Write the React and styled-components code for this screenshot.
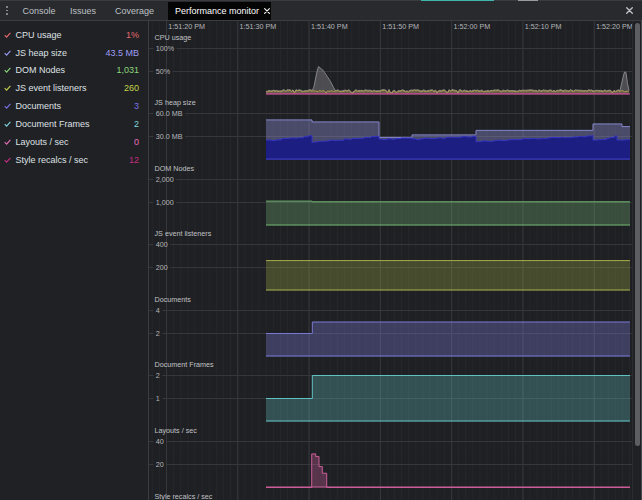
import React from 'react';
import styled, { createGlobalStyle } from 'styled-components';

const GlobalStyle = createGlobalStyle`
  html, body {
    margin: 0;
    padding: 0;
    background: #202124;
  }
  body {
    width: 642px;
    height: 500px;
    overflow: hidden;
    font-family: "Liberation Sans", Arial, sans-serif;
  }
`;

// plot geometry (px, inside each chart svg)
const PLOT_W = 483;
const PLOT_H = 54.6;
const TOP = 5.5;
const RANGE = 46;
const ZERO = TOP + RANGE;
const DATA_START = 117;
const DATA_END = 481;

const yOf = (v, max) => TOP + (1 - v / max) * RANGE;

// deterministic noise so every render looks the same
let seed = 11;
const rand = () => {
  seed = (seed * 16807) % 2147483647;
  return (seed - 1) / 2147483646;
};

const stepPaths = (steps, max, end = DATA_END) => {
  const pts = [];
  steps.forEach(([x, v], i) => {
    if (i > 0) pts.push([x, yOf(steps[i - 1][1], max)]);
    pts.push([x, yOf(v, max)]);
  });
  pts.push([end, yOf(steps[steps.length - 1][1], max)]);
  const line = pts.map(([x, y]) => `${x.toFixed(1)} ${y.toFixed(2)}`).join(' L ');
  return {
    line: `M ${line}`,
    area: `M ${steps[0][0]} ${ZERO} L ${line} L ${end} ${ZERO} Z`,
  };
};

const linePaths = (pts, max) => {
  const line = pts.map(([x, v]) => `${x.toFixed(1)} ${yOf(v, max).toFixed(2)}`).join(' L ');
  return {
    line: `M ${line}`,
    area: `M ${pts[0][0]} ${ZERO} L ${line} L ${pts[pts.length - 1][0]} ${ZERO} Z`,
  };
};

const interp = (keys, x) => {
  for (let i = 0; i < keys.length - 1; i++) {
    const [x0, v0] = keys[i];
    const [x1, v1] = keys[i + 1];
    if (x >= x0 && x <= x1) return v0 + ((v1 - v0) * (x - x0)) / (x1 - x0);
  }
  return 0;
};

// CPU usage
const peakA = [[164.3, 0.1], [168, 0.5], [169.3, 0.61], [171, 0.58], [174.3, 0.52], [181, 0.3], [186, 0.09]];
const peakB = [[471, 0.08], [475.3, 0.49], [477, 0.48], [479.5, 0.08]];
const cpuBase = [];
const cpuTotal = [];
for (let x = DATA_START; x <= DATA_END; x += 1.5) {
  let base = 0.075 + (rand() - 0.5) * 0.035;
  if (rand() < 0.05) base = 0.03;
  let total = base + 0.008 + rand() * 0.012;
  if (x >= 164 && x <= 186) total = Math.max(total, interp(peakA, x));
  if (x >= 471 && x <= 479.5) total = Math.max(total, interp(peakB, x));
  cpuBase.push([x, base * 100]);
  cpuTotal.push([x, total * 100]);
}

// JS heap
const heapTotal = [[117, 51.65], [163, 49], [230, 28.8], [263, 32.1], [327, 38], [444, 46.4], [473, 42.9]];
const heapSegs = [
  [117, 163, 24.9, 30.8],
  [163, 230, 23.0, 30.1],
  [230, 263, 26.4, 28.0],
  [263, 327, 26.6, 29.8],
  [327, 444, 23.3, 31.0],
  [444, 468, 24.7, 30.8],
  [468, 481, 24.7, 26.2],
];
const heapUsed = [];
heapSegs.forEach(([x0, x1, v0, v1]) => {
  let x = x0;
  const cap = interp(heapTotal.flatMap(([hx, hv], i) => {
    const next = heapTotal[i + 1] ? heapTotal[i + 1][0] : DATA_END;
    return [[hx, hv], [next - 0.01, hv]];
  }), x0 + 0.5) - 0.8;
  while (x < x1) {
    const t = (x - x0) / (x1 - x0);
    heapUsed.push([x, Math.min(cap, v0 + (v1 - v0) * t + (rand() - 0.5) * 1.5)]);
    x += 2.5 + rand() * 3.5;
  }
});

const TIMES = ['1:51:20 PM', '1:51:30 PM', '1:51:40 PM', '1:51:50 PM', '1:52:00 PM', '1:52:10 PM', '1:52:20 PM'];

const METRICS = [
  { label: 'CPU usage', value: '1%', color: '#e6696f' },
  { label: 'JS heap size', value: '43.5 MB', color: '#9c9cf6' },
  { label: 'DOM Nodes', value: '1,031', color: '#8bd67c' },
  { label: 'JS event listeners', value: '260', color: '#c5d24c' },
  { label: 'Documents', value: '3', color: '#7b73e8' },
  { label: 'Document Frames', value: '2', color: '#7cd8dd' },
  { label: 'Layouts / sec', value: '0', color: '#e670bb' },
  { label: 'Style recalcs / sec', value: '12', color: '#c42c81' },
];

const CHARTS = [
  { title: 'CPU usage', labels: ['100%', '50%'], kind: 'cpu' },
  { title: 'JS heap size', labels: ['60.0 MB', '30.0 MB'], kind: 'heap' },
  {
    title: 'DOM Nodes', labels: ['2,000', '1,000'], max: 2000,
    steps: [[117, 1060], [163, 1031]], stroke: '#6fb272', fill: 'rgba(111,178,114,0.32)',
  },
  {
    title: 'JS event listeners', labels: ['400', '200'], max: 400,
    steps: [[117, 260]], stroke: '#a6ae4a', fill: 'rgba(166,174,74,0.3)',
  },
  {
    title: 'Documents', labels: ['4', '2'], max: 4,
    steps: [[117, 2], [163.3, 3]], stroke: '#7a7ad6', fill: 'rgba(122,122,214,0.34)',
  },
  {
    title: 'Document Frames', labels: ['2', '1'], max: 2,
    steps: [[117, 1], [163.3, 2]], stroke: '#63c4c4', fill: 'rgba(99,196,196,0.3)',
  },
  {
    title: 'Layouts / sec', labels: ['40', '20'], max: 40,
    steps: [[117, 0], [162.7, 29.2], [166.7, 26.9], [170, 18.2], [173.3, 12.4], [177.7, 0]],
    stroke: '#cc5f9b', fill: 'rgba(204,95,155,0.32)',
  },
  {
    title: 'Style recalcs / sec', labels: ['40', '20'], max: 40,
    steps: [[117, 0]], stroke: '#c42c81', fill: 'rgba(196,44,129,0.3)',
  },
];

// Arial advance widths, used to leave a gap in the grid line behind a label
const CHAR_W = { '.': 278, ',': 278, '%': 889, ' ': 278, M: 833, B: 667 };
const LABEL_SIZE = 7.2;
const textWidth = (s) =>
  s.split('').reduce((w, c) => w + (CHAR_W[c] || 556), 0) / 1000 * LABEL_SIZE;

const Window = styled.div`
  width: 642px;
  height: 500px;
  display: flex;
  flex-direction: column;
  background: #202124;
  overflow: hidden;
`;

const TopStrip = styled.div`
  height: 1px;
  flex-shrink: 0;
  display: flex;
  gap: 24px;
  padding-left: 421px;
  background: #3a3b3f;
`;

const StripBit = styled.span`
  width: ${(p) => p.$w}px;
  height: 1px;
  background: ${(p) => p.$color};
`;

const TabBar = styled.div`
  height: 19px;
  flex-shrink: 0;
  display: flex;
  align-items: stretch;
  background: #292a2d;
  border-bottom: 1px solid #3c3d41;
`;

const Kebab = styled.div`
  width: 14.5px;
  display: flex;
  flex-direction: column;
  align-items: center;
  justify-content: center;
  gap: 1.4px;
  padding-right: 1px;

  span {
    width: 1.8px;
    height: 1.8px;
    border-radius: 50%;
    background: #9aa0a6;
  }
`;

const Tab = styled.div`
  width: ${(p) => p.$w}px;
  display: flex;
  align-items: center;
  gap: 5px;
  padding-left: 7px;
  margin-top: ${(p) => (p.$active ? 1 : 0)}px;
  box-sizing: border-box;
  font-size: 9px;
  color: ${(p) => (p.$active ? '#ffffff' : '#bdc1c6')};
  background: ${(p) => (p.$active ? '#050505' : 'transparent')};
  white-space: nowrap;
`;

const CloseAll = styled.div`
  margin-left: auto;
  margin-right: 9px;
  display: flex;
  align-items: center;
`;

const Body = styled.div`
  flex: 1;
  min-height: 0;
  display: flex;
`;

const Sidebar = styled.div`
  width: 149px;
  flex-shrink: 0;
  box-sizing: border-box;
  padding: 4.8px 9px 0 4px;
  border-right: 1px solid #3c3d41;
  background: #202124;
`;

const LegendRow = styled.div`
  height: 17.86px;
  display: flex;
  align-items: center;
  font-size: 9px;
`;

const Check = styled.svg`
  width: 7px;
  height: 6px;
  margin-right: 4.5px;
  flex-shrink: 0;
`;

const LegendLabel = styled.span`
  flex: 1;
  color: #dfe1e5;
  white-space: nowrap;
`;

const LegendValue = styled.span`
  color: ${(p) => p.$color};
`;

const ChartPanel = styled.div`
  flex: 1;
  min-width: 0;
  overflow: hidden;
  display: flex;
  flex-direction: column;
  background-color: #1f2023;
  background-image:
    linear-gradient(to right, #36373a 1px, transparent 1px),
    linear-gradient(to right, #252629 1px, transparent 1px);
  background-size: 71.3px 100%, 7.13px 100%;
  background-position: 17px 0, 17px 0;
`;

const TimeAxis = styled.div`
  height: 10.5px;
  flex-shrink: 0;
  display: flex;
  padding-left: 17px;
  white-space: nowrap;
`;

const TimeLabel = styled.span`
  width: 71.3px;
  flex-shrink: 0;
  box-sizing: border-box;
  padding-left: 2.3px;
  font-size: ${LABEL_SIZE}px;
  line-height: 11px;
  color: #b4b6ba;
`;

const ChartSection = styled.div`
  height: 65.6px;
  flex-shrink: 0;
`;

const ChartTitle = styled.div`
  height: 11px;
  line-height: 11px;
  padding-left: 5.5px;
  font-size: ${LABEL_SIZE}px;
  color: #c0c2c6;
  white-space: nowrap;
`;

const Plot = styled.svg`
  display: block;
  width: ${PLOT_W}px;
  height: ${PLOT_H}px;
`;

const GridText = styled.text`
  font-family: "Liberation Sans", Arial, sans-serif;
  font-size: ${LABEL_SIZE}px;
  fill: #b4b6ba;
`;

const Scrollbar = styled.div`
  width: 10px;
  flex-shrink: 0;
  box-sizing: border-box;
  padding: 2px 0 0 1.5px;
  background: #202124;
  border-left: 1px solid #2b2c2f;
  border-right: 1px solid #47484b;
`;

const Thumb = styled.div`
  width: 5px;
  height: 423px;
  border-radius: 3px;
  background: #5d5e62;
`;

const CrossIcon = ({ size = 6, color }) => (
  <svg width={size} height={size} viewBox="0 0 6 6">
    <path d="M0.6 0.6 L5.4 5.4 M5.4 0.6 L0.6 5.4" stroke={color} strokeWidth="1.1" strokeLinecap="round" />
  </svg>
);

const GridLine = ({ y, label }) => {
  const start = 6.7 + textWidth(label) + 2.5;
  return (
    <g>
      <line x1="0" x2="4.5" y1={y} y2={y} stroke="#37383b" strokeWidth="1" />
      <line x1={start} x2={PLOT_W} y1={y} y2={y} stroke="#37383b" strokeWidth="1" />
      <GridText x="6.7" y={y + 2.6}>{label}</GridText>
    </g>
  );
};

const CpuData = () => {
  const total = linePaths(cpuTotal, 100);
  const base = linePaths(cpuBase, 100);
  return (
    <g>
      <path d={total.area} fill="rgba(140,140,146,0.42)" />
      <path d={total.line} fill="none" stroke="#8e8f93" strokeWidth="0.9" />
      <path d={base.area} fill="rgba(168,138,62,0.28)" />
      <path d={base.line} fill="none" stroke="#b09a4e" strokeWidth="1" />
      <line x1={DATA_START} x2={DATA_END} y1={ZERO - 0.6} y2={ZERO - 0.6} stroke="#c8479a" strokeWidth="1.3" />
    </g>
  );
};

const HeapData = () => {
  const total = stepPaths(heapTotal, 60);
  const used = stepPaths(heapUsed, 60);
  return (
    <g>
      <path d={total.area} fill="rgba(138,139,208,0.4)" />
      <path d={total.line} fill="none" stroke="#8788cc" strokeWidth="1" />
      <path d={used.area} fill="#1d1e82" />
      <path d={used.line} fill="none" stroke="#3535c2" strokeWidth="1" />
      <line x1={DATA_START} x2={DATA_END} y1={ZERO - 0.5} y2={ZERO - 0.5} stroke="#3b3bd4" strokeWidth="1" />
    </g>
  );
};

const StepData = ({ chart }) => {
  const { line, area } = stepPaths(chart.steps, chart.max);
  return (
    <g>
      <path d={area} fill={chart.fill} />
      <path d={line} fill="none" stroke={chart.stroke} strokeWidth="1" />
      <line x1={DATA_START} x2={DATA_END} y1={ZERO - 0.5} y2={ZERO - 0.5} stroke={chart.stroke} strokeWidth="1" />
    </g>
  );
};

const Chart = ({ chart }) => (
  <ChartSection>
    <ChartTitle>{chart.title}</ChartTitle>
    <Plot viewBox={`0 0 ${PLOT_W} ${PLOT_H}`}>
      <GridLine y={TOP} label={chart.labels[0]} />
      <GridLine y={TOP + RANGE / 2} label={chart.labels[1]} />
      {chart.kind === 'cpu' && <CpuData />}
      {chart.kind === 'heap' && <HeapData />}
      {chart.steps && <StepData chart={chart} />}
    </Plot>
  </ChartSection>
);

const TABS = [
  { name: 'Console', w: 47.5 },
  { name: 'Issues', w: 45 },
  { name: 'Coverage', w: 60 },
  { name: 'Performance monitor', w: 103, active: true },
];

export default function App() {
  return (
    <>
      <GlobalStyle />
      <Window>
        <TopStrip>
          <StripBit $w={73} $color="#3fb5b0" />
          <StripBit $w={20} $color="#9a9b9e" />
        </TopStrip>
        <TabBar>
          <Kebab>
            <span />
            <span />
            <span />
          </Kebab>
          {TABS.map((t) => (
            <Tab key={t.name} $w={t.w} $active={t.active}>
              {t.name}
              {t.active && <CrossIcon size={6} color="#ffffff" />}
            </Tab>
          ))}
          <CloseAll>
            <CrossIcon size={7} color="#c4c7cc" />
          </CloseAll>
        </TabBar>
        <Body>
          <Sidebar>
            {METRICS.map((m) => (
              <LegendRow key={m.label}>
                <Check viewBox="0 0 7 6">
                  <path d="M0.7 3.2 L2.6 5.1 L6.4 0.8" fill="none" stroke={m.color} strokeWidth="1.1" />
                </Check>
                <LegendLabel>{m.label}</LegendLabel>
                <LegendValue $color={m.color}>{m.value}</LegendValue>
              </LegendRow>
            ))}
          </Sidebar>
          <ChartPanel>
            <TimeAxis>
              {TIMES.map((t) => (
                <TimeLabel key={t}>{t}</TimeLabel>
              ))}
            </TimeAxis>
            {CHARTS.map((c) => (
              <Chart key={c.title} chart={c} />
            ))}
          </ChartPanel>
          <Scrollbar>
            <Thumb />
          </Scrollbar>
        </Body>
      </Window>
    </>
  );
}
